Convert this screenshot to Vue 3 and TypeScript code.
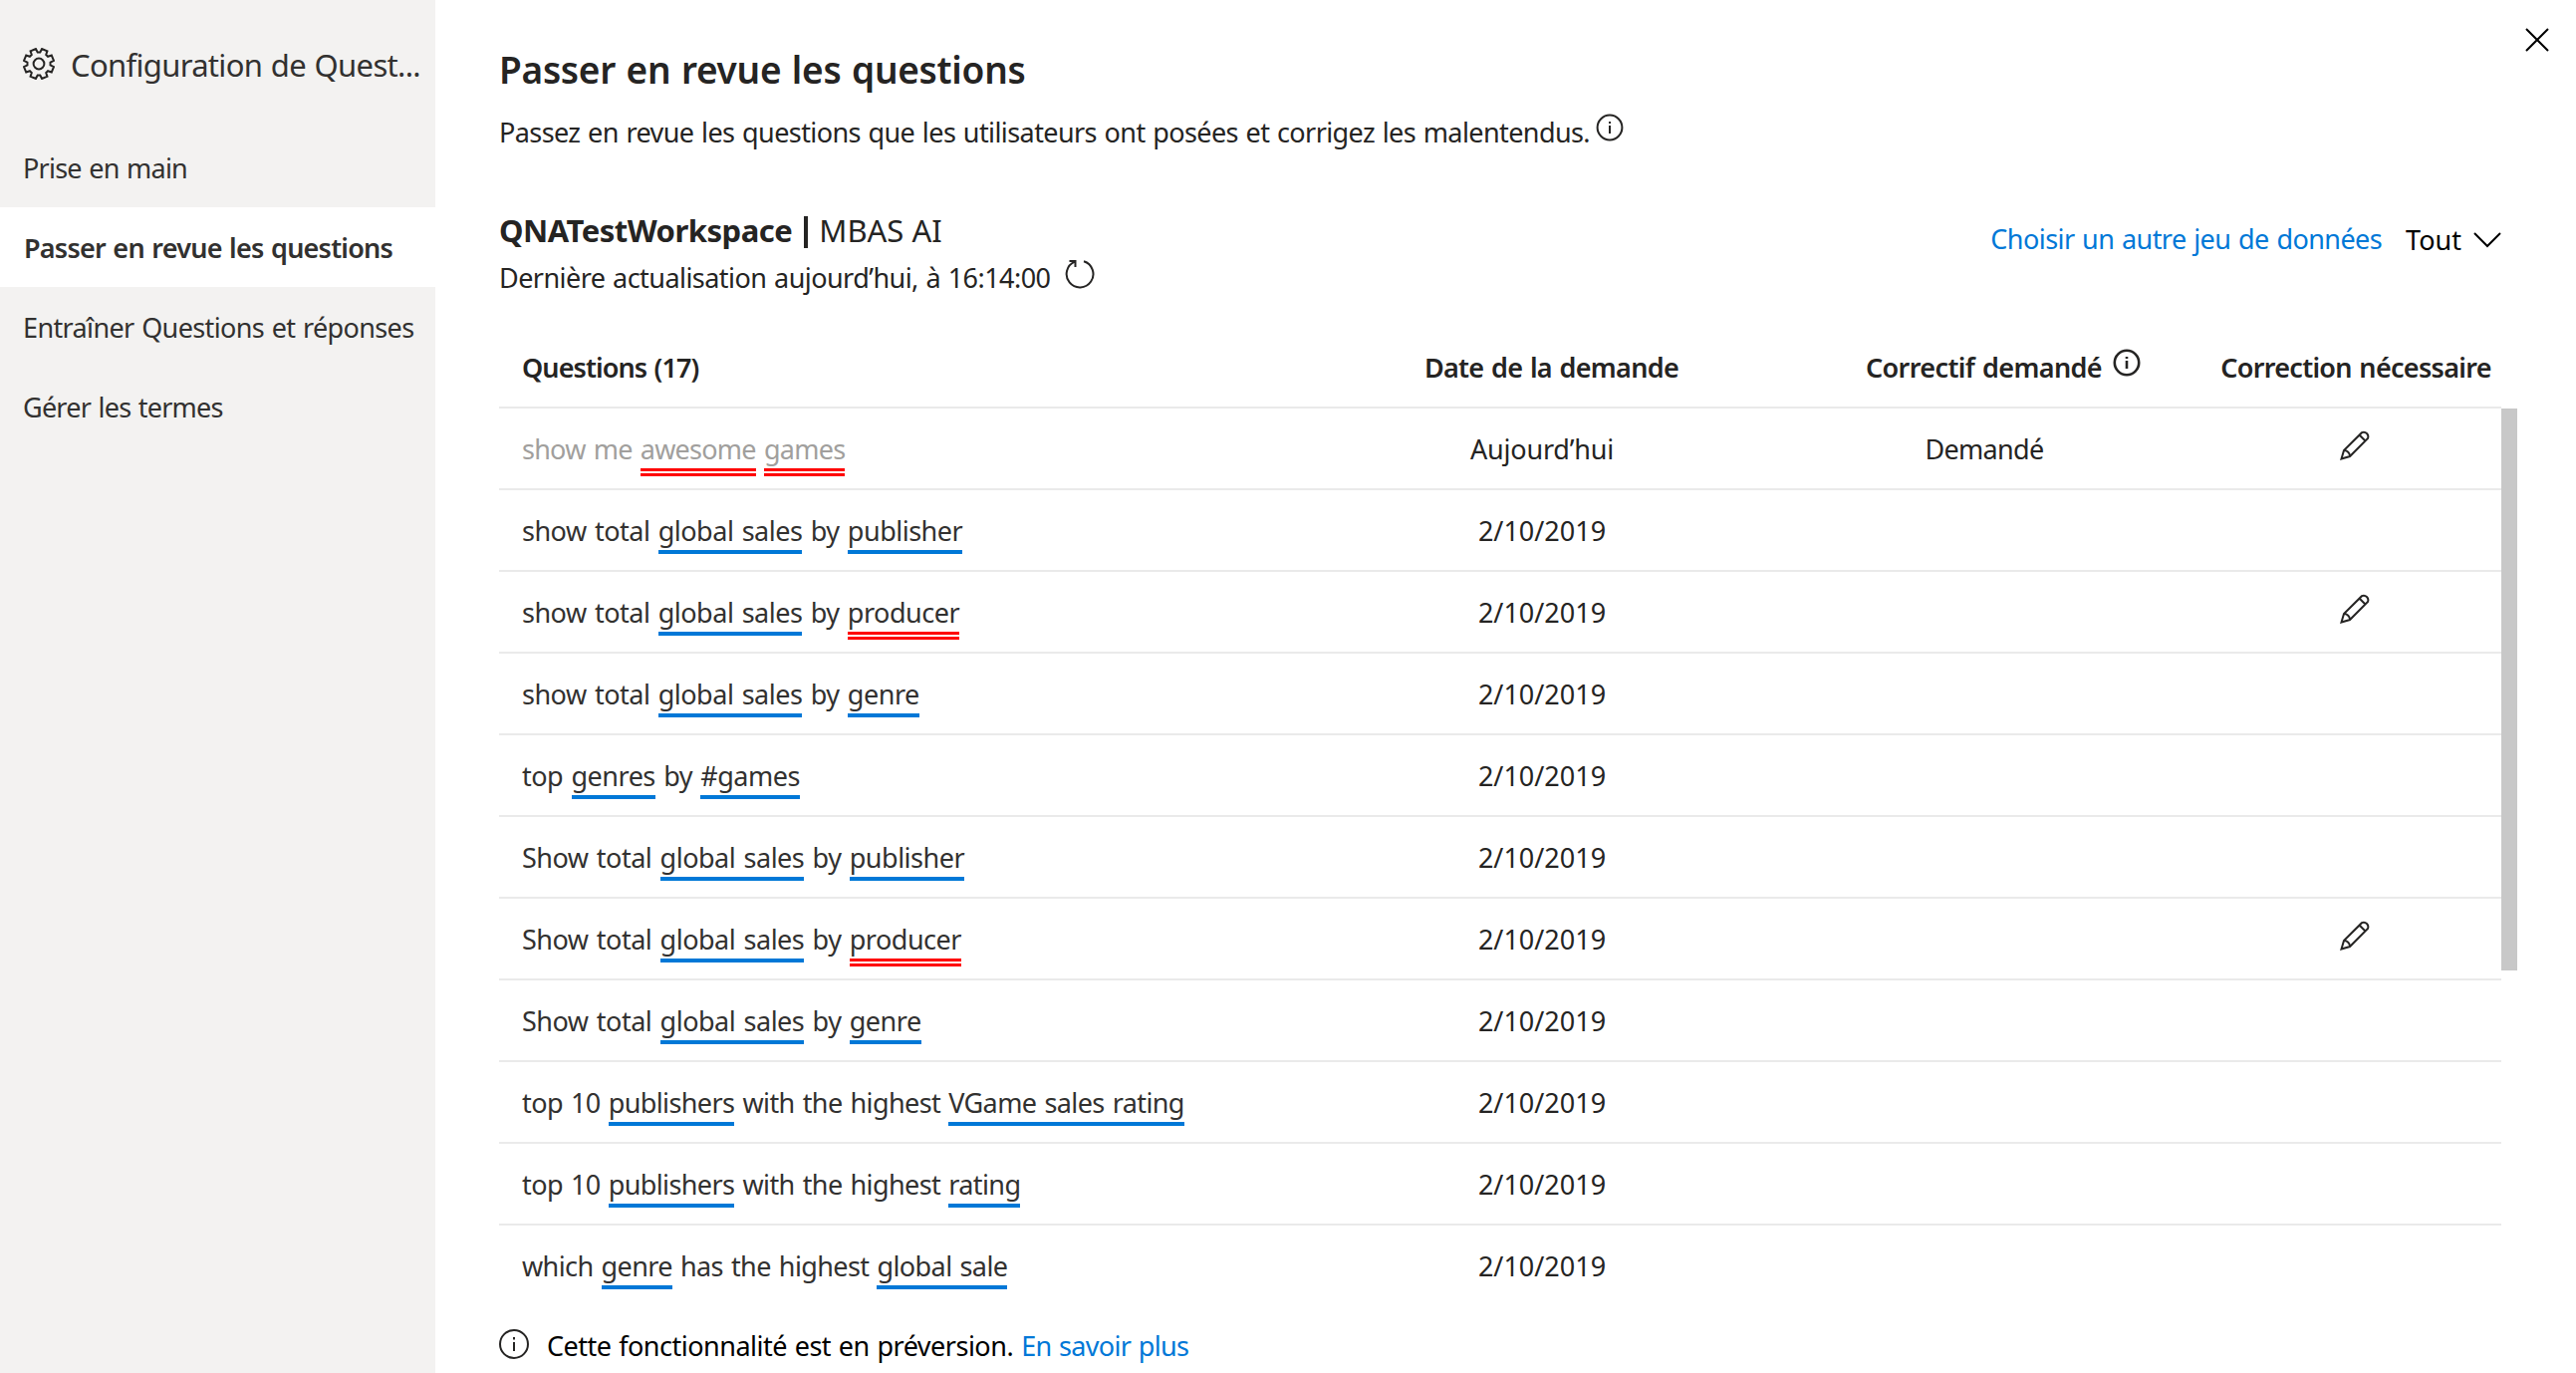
<script setup lang="ts">
interface Part {
  text: string
  mark?: 'known' | 'unknown'
}
interface Row {
  parts: Part[]
  date: string
  status?: string
  editable?: boolean
  muted?: boolean
}

const nav = [
  { label: 'Prise en main', cls: 'start' },
  { label: 'Passer en revue les questions', cls: 'active' },
  { label: 'Entraîner Questions et réponses', cls: 'teach' },
  { label: 'Gérer les termes', cls: 'terms' },
]

// eight-toothed gear outline centred on 16,16
const gearPath = (() => {
  const pts: string[] = []
  const at = (r: number, deg: number) => {
    const a = (deg * Math.PI) / 180
    pts.push(`${(16 + r * Math.cos(a)).toFixed(2)} ${(16 + r * Math.sin(a)).toFixed(2)}`)
  }
  for (let k = 0; k < 8; k++) {
    const c = 22.5 + 45 * k
    at(11.6, c - 16)
    at(15.3, c - 11)
    at(15.3, c + 11)
    at(11.6, c + 16)
  }
  return `M${pts.join('L')}Z`
})()

// [word] is a recognised term, {word} an unrecognised one
function parse(source: string): Part[] {
  return source
    .split(/(\[[^\]]*\]|\{[^}]*\})/)
    .filter((s) => s.length > 0)
    .map((s) => {
      if (s.startsWith('[')) return { text: s.slice(1, -1), mark: 'known' }
      if (s.startsWith('{')) return { text: s.slice(1, -1), mark: 'unknown' }
      return { text: s }
    })
}

const day = '2/10/2019'
const rows: Row[] = [
  { parts: parse('show me {awesome} {games}'), date: 'Aujourd’hui', status: 'Demandé', editable: true, muted: true },
  { parts: parse('show total [global sales] by [publisher]'), date: day },
  { parts: parse('show total [global sales] by {producer}'), date: day, editable: true },
  { parts: parse('show total [global sales] by [genre]'), date: day },
  { parts: parse('top [genres] by [#games]'), date: day },
  { parts: parse('Show total [global sales] by [publisher]'), date: day },
  { parts: parse('Show total [global sales] by {producer}'), date: day, editable: true },
  { parts: parse('Show total [global sales] by [genre]'), date: day },
  { parts: parse('top 10 [publishers] with the highest [VGame sales rating]'), date: day },
  { parts: parse('top 10 [publishers] with the highest [rating]'), date: day },
  { parts: parse('which [genre] has the highest [global sale]'), date: day },
]
</script>

<template>
  <div class="page">
    <aside class="sidebar">
      <div class="brand">
        <svg class="gear" viewBox="0 0 32 32"><path :d="gearPath" /><circle cx="16" cy="16" r="5.4" /></svg>
        <span class="brand-text">Configuration de Quest...</span>
      </div>
      <nav>
        <a v-for="n in nav" :key="n.label" class="nav-item" :class="n.cls"><span>{{ n.label }}</span></a>
      </nav>
    </aside>

    <main class="content">
      <header class="top">
        <h1><span>Passer en revue les questions</span></h1>
        <svg class="close" viewBox="0 0 24 24"><path d="M1 1L23 23M23 1L1 23" /></svg>
      </header>
      <p class="intro">
        <span class="intro-text">Passez en revue les questions que les utilisateurs ont posées et corrigez les malentendus.</span>
        <svg class="info" viewBox="0 0 28 28"><circle cx="14" cy="14" r="12.4" /><path d="M14 12V20M14 8V10" /></svg>
      </p>

      <section class="dataset">
        <div class="dataset-info">
          <div class="dataset-name"><b>QNATestWorkspace</b><i class="bar"></i><span>MBAS AI</span></div>
          <div class="refresh-line">
            <span class="refreshed">Dernière actualisation aujourd’hui, à 16:14:00</span>
            <svg class="refresh" viewBox="0 0 30 30"><path d="M19 2.2A13.4 13.4 0 1 1 10 2.6M4.5 2H10.5V8" /></svg>
          </div>
        </div>
        <div class="dataset-actions">
          <a class="link choose">Choisir un autre jeu de données</a>
          <span class="all">Tout</span>
          <svg class="chevron" viewBox="0 0 28 16"><path d="M1 1L14 14L27 1" /></svg>
        </div>
      </section>

      <section class="table">
        <div class="row head">
          <div class="c-question"><span class="h-q">Questions (17)</span></div>
          <div class="c-date"><span class="h-d">Date de la demande</span></div>
          <div class="c-status">
            <span class="h-s">Correctif demandé</span>
            <svg class="info bold" viewBox="0 0 28 28"><circle cx="14" cy="14" r="12.2" /><path d="M14 12V20M14 8V10" /></svg>
          </div>
          <div class="c-fix"><span class="h-f">Correction nécessaire</span></div>
        </div>
        <div class="scroll-area">
          <div class="rows">
            <div v-for="(r, i) in rows" :key="i" class="row" :class="{ muted: r.muted }">
              <div class="c-question"><span v-for="(p, j) in r.parts" :key="j" :class="p.mark">{{ p.text }}</span></div>
              <div class="c-date"><span>{{ r.date }}</span></div>
              <div class="c-status"><span>{{ r.status }}</span></div>
              <div class="c-fix">
                <svg v-if="r.editable" class="pencil" viewBox="0 0 30 30"><path d="M1.5 28.5L4 20L22 2.2A4.5 4.5 0 0 1 28 8L10 26ZM19.5 4.5L25.5 10.5M4 20A6 6 0 0 1 10 26" /></svg>
              </div>
            </div>
          </div>
          <div class="thumb"></div>
        </div>
      </section>

      <footer class="preview">
        <svg class="info big" viewBox="0 0 30 30"><circle cx="15" cy="15" r="14" /><path d="M15 13V22M15 8V10.5" /></svg>
        <span class="preview-text">Cette fonctionnalité est en préversion.</span>
        <a class="link more">En savoir plus</a>
      </footer>
    </main>
  </div>
</template>

<style>
body { margin: 0; overflow: hidden; background: #fff; }
</style>

<style scoped>
.page {
  display: flex; width: 2586px; height: 1378px; overflow: hidden; background: #fff;
  font-family: "Noto Sans", "Open Sans", sans-serif; font-size: 27px; line-height: 40px; color: #252423;
  white-space: pre; word-spacing: 1.2px;
}
svg { display: block; flex: none; fill: none; stroke: #252423; stroke-width: 2; }
.sidebar { width: 437px; flex: none; background: #f3f2f1; color: #323130; }
.brand { display: flex; height: 128px; padding-left: 23px; box-sizing: border-box; }
.gear { width: 32px; height: 32px; margin-top: 48px; }
.brand-text { margin: 45px 0 0 16px; font-size: 31px; letter-spacing: -0.68px; }
.nav-item { display: flex; align-items: center; height: 80px; padding: 2px 0 0 23px; box-sizing: border-box; letter-spacing: -0.77px; }
.nav-item.active { background: #fff; font-weight: 600; padding-left: 24px; }
.nav-item.teach { letter-spacing: -0.63px; }
.content { flex: 1; display: flex; flex-direction: column; padding-left: 64px; }
.top { display: flex; justify-content: space-between; height: 108px; }
h1 { margin: 48px 0 0; font-size: 37px; font-weight: 600; line-height: 44px; letter-spacing: -0.26px; }
.close { width: 24px; height: 24px; margin: 28px 27px 0 0; stroke: #000; }
.intro { display: flex; margin: 0; height: 100px; }
.intro-text { margin-top: 5px; letter-spacing: -0.59px; }
.info { width: 28px; height: 28px; stroke-width: 2; }
.intro .info { margin: 6px 0 0 6px; }
.info.bold { stroke-width: 2.6; margin: 32px 0 0 11px; }
.dataset { display: flex; justify-content: space-between; height: 110px; width: 2010px; }
.dataset-name { display: flex; height: 50px; font-size: 31px; padding-top: 3px; box-sizing: border-box; word-spacing: 0; }
.dataset-name b { letter-spacing: -0.5px; }
.bar { width: 4px; height: 32px; margin: 6px 11px 0 12px; background: #252423; }
.refresh-line { display: flex; padding-top: 1px; }
.refreshed { letter-spacing: -0.55px; }
.refresh { width: 30px; height: 30px; margin: 1px 0 0 15px; }
.dataset-actions { display: flex; padding-top: 12px; }
.link { color: #0078d7; }
.choose { letter-spacing: -0.57px; }
.all { color: #000; margin: 1px 0 0 24px; }
.chevron { width: 28px; height: 16px; margin: 13px 0 0 12px; stroke: #000; }
.row { display: flex; height: 80px; line-height: 82px; border-bottom: 2px solid #eaeaea; }
.head { height: 90px; width: 2010px; font-weight: 600; line-height: 102px; }
.h-q { letter-spacing: -0.9px; }
.h-d { letter-spacing: -0.68px; }
.h-s { letter-spacing: -0.6px; }
.h-f { letter-spacing: -0.7px; }
.c-question { width: 905px; padding-left: 23px; box-sizing: border-box; }
.c-date { width: 284px; text-align: center; }
.c-status { width: 604px; text-align: center; }
.c-fix { width: 140px; display: flex; justify-content: center; }
.head .c-date { width: 303px; }
.head .c-status { display: flex; justify-content: center; width: 604px; }
.head .c-fix { width: 104px; }
.scroll-area { display: flex; height: 900px; overflow: hidden; }
.rows { width: 2010px; }
.thumb { width: 16px; height: 564px; background: #c8c8c8; }
.rows .c-question { color: #323130; letter-spacing: -0.5px; word-spacing: 1.8px; }
.rows .row:nth-child(n + 9) .c-question { letter-spacing: -0.6px; word-spacing: 1.6px; }
.rows .c-status { letter-spacing: -0.7px; }
.rows .muted .c-date { letter-spacing: -0.2px; }
.rows .muted .c-question { color: #a19f9d; letter-spacing: -0.75px; }
.known, .unknown { display: inline-block; line-height: 38px; border-bottom: 4px solid #0078d7; }
.unknown { border-bottom: 8px double #f00; }
.pencil { width: 30px; height: 30px; margin-top: 22px; }
.preview { display: flex; color: #000; padding-top: 8px; }
.preview-text { margin: 13px 8px 0 18px; letter-spacing: -0.5px; }
.more { margin-top: 13px; letter-spacing: -0.68px; }
.big { width: 30px; height: 30px; margin-top: 16px; }
</style>
